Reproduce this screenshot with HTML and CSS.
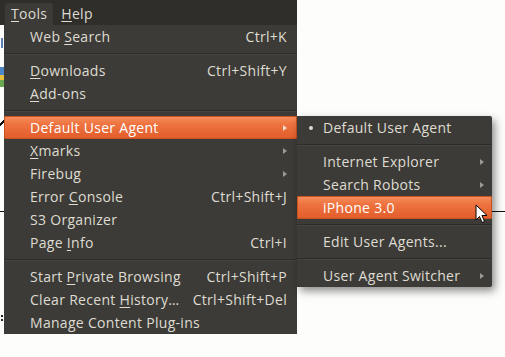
FILE: index.html
```html
<!DOCTYPE html>
<html lang="en">
<head>
  <meta charset="UTF-8" />
  <title>Tools menu</title>
  <link rel="stylesheet" href="styles.css">
</head>
<body>

  <div class="menubar">
    <span class="bar-item open"><u>T</u>ools</span>
    <span class="bar-item"><u>H</u>elp</span>
  </div>

  <div class="page">
    <div class="frag frag-blue"></div>
    <div class="frag frag-icon"></div>
    <div class="frag frag-tick"></div>
    <div class="rule"></div>
    <div class="frag frag-dots"></div>
    <div class="text-strip"></div>
  </div>

  <!-- Tools dropdown -->
  <div class="menu main-menu">
    <div class="item"><span>Web <u>S</u>earch</span><span>Ctrl+K</span></div>
    <div class="sep"></div>
    <div class="item"><span><u>D</u>ownloads</span><span>Ctrl+Shift+Y</span></div>
    <div class="item"><span><u>A</u>dd-ons</span></div>
    <div class="sep"></div>
    <div class="item active"><span>Default User Agent</span><i class="arrow"></i></div>
    <div class="item"><span><u>X</u>marks</span><i class="arrow"></i></div>
    <div class="item"><span>Firebug</span><i class="arrow"></i></div>
    <div class="item"><span>Error <u>C</u>onsole</span><span>Ctrl+Shift+J</span></div>
    <div class="item"><span>S3 Organizer</span></div>
    <div class="item"><span>Page <u>I</u>nfo</span><span>Ctrl+I</span></div>
    <div class="sep"></div>
    <div class="item"><span>Start <u>P</u>rivate Browsing</span><span>Ctrl+Shift+P</span></div>
    <div class="item"><span>Clear Recent <u>H</u>istory…</span><span>Ctrl+Shift+Del</span></div>
    <div class="item"><span>Manage Content Plug-ins</span></div>
  </div>

  <!-- Default User Agent submenu -->
  <div class="menu sub-menu">
    <div class="item checked"><span>Default User Agent</span></div>
    <div class="sep"></div>
    <div class="item"><span>Internet Explorer</span><i class="arrow"></i></div>
    <div class="item"><span>Search Robots</span><i class="arrow"></i></div>
    <div class="item active"><span>iPhone 3.0</span></div>
    <div class="sep"></div>
    <div class="item"><span>Edit User Agents...</span></div>
    <div class="sep"></div>
    <div class="item"><span>User Agent Switcher</span><i class="arrow"></i></div>
  </div>

  <svg class="cursor" width="13" height="20" viewBox="0 0 13 20">
    <path d="M1 1 L1 16 L4.5 12.5 L7 18.5 L9.5 17.5 L7 11.5 L12 11.5 Z" fill="#fff" stroke="#000" stroke-width="1" stroke-linejoin="round"/>
  </svg>

</body>
</html>
```

FILE: styles.css
```css
/* --- Page --- */
html, body {
  margin: 0;
}
body {
  width: 505px;
  height: 357px;
  overflow: hidden;
  position: relative;
  background: #fdfdfb;
  font-family: 'Open Sans', 'DejaVu Sans', sans-serif;
  font-size: 14px;
  letter-spacing: 0.3px;
  color: #dfdbd2;
}
u {
  text-decoration-thickness: 1px;
  text-underline-offset: 2px;
}

/* --- Menubar --- */
.menubar {
  width: 297px;
  height: 25px;
  background: #2f2e2b;
  display: flex;
  align-items: flex-end;
  padding-left: 5px;
  box-sizing: border-box;
}
.bar-item {
  height: 22px;
  line-height: 21px;
  padding: 0 6px;
}
.bar-item.open {
  background: #3c3b37;
  border-radius: 3px 3px 0 0;
  margin-right: 2px;
}

/* --- Background page fragments (left edge, rule, text below menu) --- */
.page {
  display: flex;
  flex-direction: column;
}
.frag {
  width: 4px;
}
.frag-blue {
  height: 10px;
  margin-top: 13px;
  background: linear-gradient(90deg, #fdfdfb 1px, #5b7fb8 1px, #5b7fb8 3px, #fdfdfb 3px);
}
.frag-icon {
  height: 20px;
  margin-top: 19px;
  background: linear-gradient(#4c86c8 0, #4c86c8 40%, #e5c23a 40%, #e5c23a 65%, #6aa84f 65%);
}
.frag-tick {
  height: 8px;
  margin-top: 32px;
  background: linear-gradient(135deg, #fdfdfb 35%, #111 35%, #111 60%, #fdfdfb 60%);
}
.rule {
  height: 1px;
  margin-top: 84px;
  background: #111;
}
.frag-dots {
  height: 6px;
  margin-top: 103px;
  background: linear-gradient(#222 2px, #fdfdfb 2px, #fdfdfb 4px, #222 4px);
  width: 2px;
  margin-left: 1px;
}
.text-strip {
  height: 5px;
  margin-top: 8px;
  margin-left: 18px;
  width: 275px;
  background: repeating-linear-gradient(90deg, #1a1a1a 0 2px, #fdfdfb 2px 4px, #1a1a1a 4px 5px, #fdfdfb 5px 9px);
}

/* --- Menus --- */
.menu {
  position: absolute;
  background: #3c3b37;
  display: flex;
  flex-direction: column;
}
.main-menu {
  left: 4px;
  top: 25px;
  width: 293px;
}
.sub-menu {
  left: 297px;
  top: 116px;
  width: 195px;
  box-shadow: 3px 4px 9px rgba(0, 0, 0, 0.45);
  border-radius: 0 2px 2px 0;
}
.item {
  height: 23px;
  display: flex;
  align-items: center;
  justify-content: space-between;
  padding: 0 10px 0 26px;
  white-space: nowrap;
  position: relative;
}
.sub-menu .item {
  padding-right: 8px;
}
.item.active {
  color: #fff;
  background: linear-gradient(#f6915f, #ee7340 35%, #e15c29);
  box-shadow: inset 0 0 0 1px #c9521f;
  border-radius: 2px;
}
.item.checked::before {
  content: '';
  position: absolute;
  left: 12px;
  top: 10px;
  width: 4px;
  height: 4px;
  border-radius: 50%;
  background: #dfdbd2;
}
.arrow {
  width: 0;
  height: 0;
  border-top: 3px solid transparent;
  border-bottom: 3px solid transparent;
  border-left: 4px solid #9d9a93;
}
.item.active .arrow {
  border-left-color: #f3d9cc;
}
.sep {
  height: 11px;
  display: flex;
  flex-direction: column;
  justify-content: center;
}
.sep::before {
  content: '';
  height: 1px;
  background: #2d2c29;
  border-bottom: 1px solid #46453f;
}

/* --- Pointer --- */
.cursor {
  position: absolute;
  left: 475px;
  top: 204px;
}
```
